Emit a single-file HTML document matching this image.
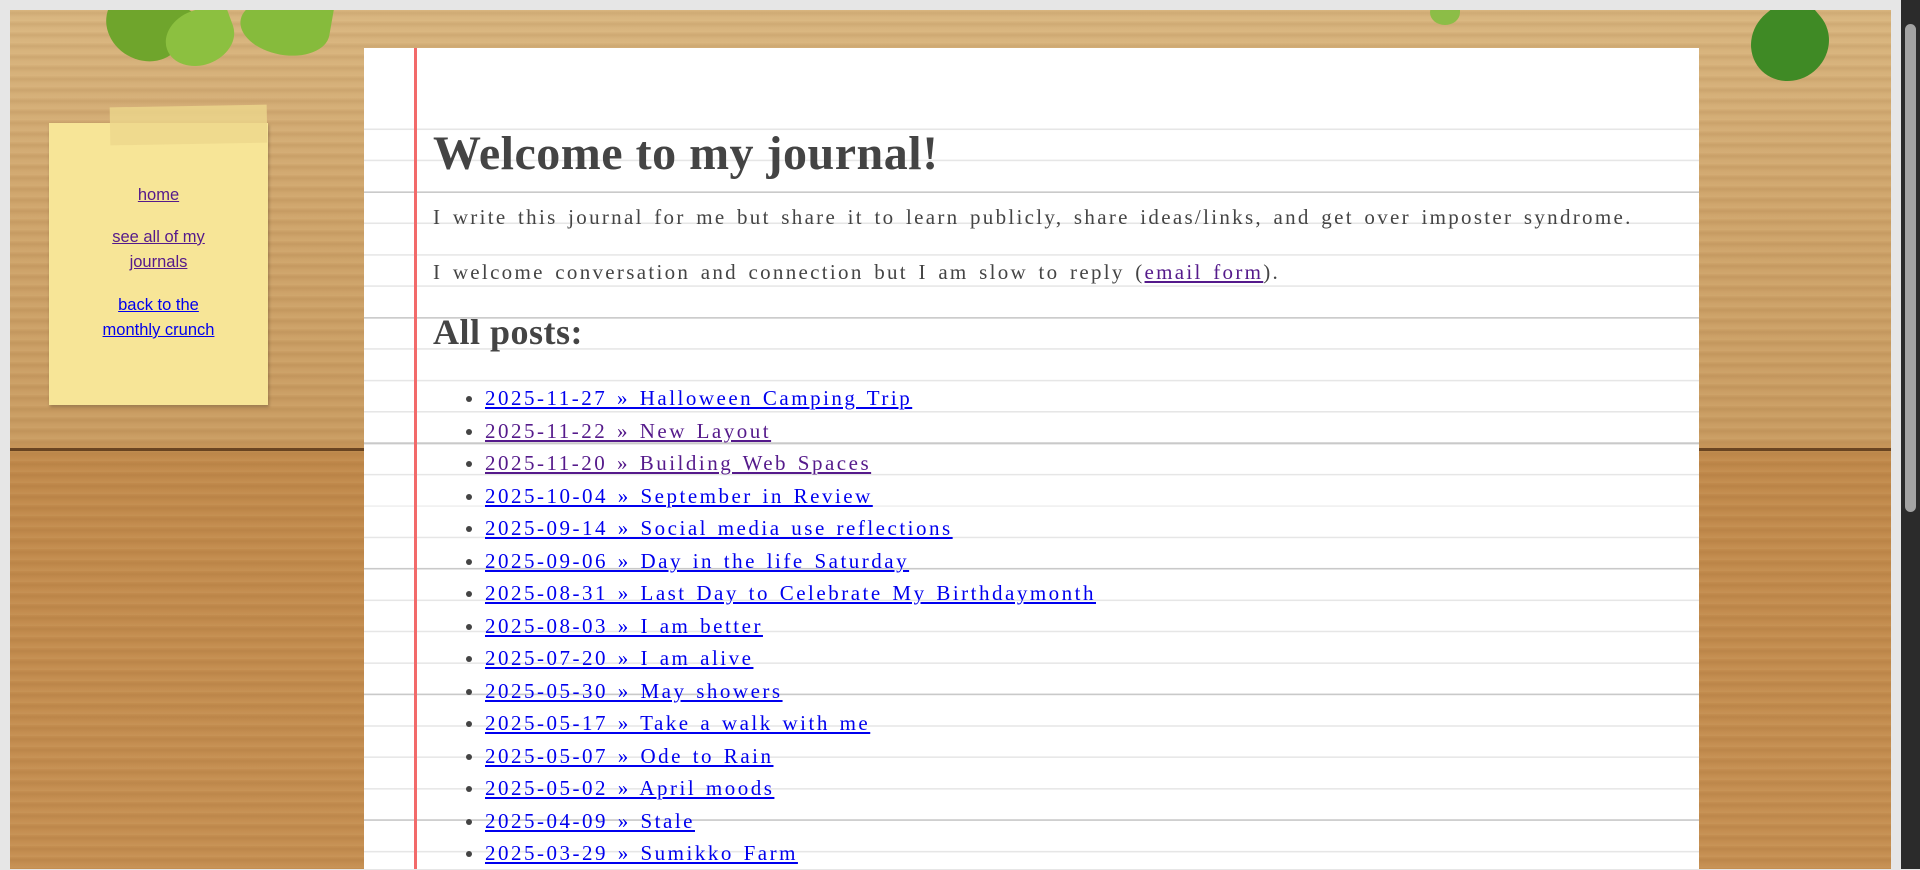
<!DOCTYPE html>
<html><head><meta charset="utf-8"><style>
html,body{margin:0;padding:0;}
body{width:1920px;height:869px;overflow:hidden;background:#e6e6e6;position:relative;font-family:"Liberation Serif",serif;}
.wood{position:absolute;left:10px;top:10px;width:1881px;height:859px;overflow:hidden;
background:
repeating-linear-gradient(180deg,rgba(120,70,20,0) 0px,rgba(120,70,20,.10) 3px,rgba(120,70,20,0) 7px,rgba(255,230,180,.06) 11px),
linear-gradient(180deg,#d9b680 0px,#cfa56c 200px,#c99c62 430px,#c18a4c 446px,#c58f52 869px);}
.plank{position:absolute;left:0;top:438px;width:100%;height:3px;background:#4a2a10;opacity:.75}
.leaf{position:absolute;background:#7cae36;border-radius:50% 0 50% 50%;}
.scroll{position:absolute;left:1901px;top:0;width:19px;height:869px;background:#2b2b2b}
.thumb{position:absolute;left:1905px;top:24px;width:11px;height:488px;background:#a3a3a3;border-radius:6px}
.paper{position:absolute;left:364px;top:48px;width:1335px;height:821px;background:#fff}
.lines{position:absolute;left:364px;top:48px;width:1335px;height:821px;
background:repeating-linear-gradient(180deg,transparent 0px,transparent 29.9px,#e6e6e6 29.9px,#e6e6e6 31.4px);background-position:0 19.2px}
.dark{position:absolute;left:364px;top:48px;width:1335px;height:821px;
background:repeating-linear-gradient(180deg,transparent 0px,transparent 124px,#c9c9c9 124px,#c9c9c9 125.6px);background-position:0 19.3px}
.cover{position:absolute;left:364px;top:48px;width:1335px;height:76px;background:#fff}
.red{position:absolute;left:414px;top:48px;width:3px;height:821px;background:#f26a6a}
.content{position:absolute;left:433px;top:50px;color:#444;}
h1{position:absolute;left:0;top:76px;margin:0;font-size:48px;white-space:nowrap;letter-spacing:0.5px;font-weight:bold}
p{position:absolute;left:0;margin:0;font-size:21px;white-space:nowrap;letter-spacing:2.3px;word-spacing:3px}
h2{position:absolute;left:0;top:261px;margin:0;font-size:36px;white-space:nowrap;font-weight:bold;letter-spacing:.5px}
ul{position:absolute;left:0;top:332px;margin:0;padding:0 0 0 52px;font-size:21px;line-height:32.5px;white-space:nowrap;}
li{letter-spacing:2.5px;word-spacing:2px}
a{color:#0000ee}
a.v{color:#551a8b}
.note{position:absolute;left:49px;top:123px;width:219px;height:282px;background:#f7e597;box-shadow:1px 2px 3px rgba(0,0,0,.25);font-family:"Liberation Sans",sans-serif;font-size:16.5px;text-align:center}
.tape{position:absolute;left:110px;top:106px;width:157px;height:38px;background:rgba(236,215,140,.8);transform:rotate(-1deg)}
.note div{position:absolute;left:0;width:100%;line-height:25px}
</style></head><body>
<div class="wood">
<div class="plank"></div>
<div class="leaf" style="left:95px;top:-20px;width:80px;height:70px;transform:rotate(30deg);background:#6fa52c"></div>
<div class="leaf" style="left:155px;top:0px;width:70px;height:55px;transform:rotate(-20deg);background:#8cc040"></div>
<div class="leaf" style="left:230px;top:-10px;width:90px;height:55px;transform:rotate(10deg);background:#86bb3c"></div>
<div class="leaf" style="left:1420px;top:-10px;width:30px;height:25px;background:#8cbd47"></div>
<div class="leaf" style="left:1740px;top:-5px;width:80px;height:75px;transform:rotate(-40deg);background:#3f8a25"></div>
</div>
<div class="scroll"></div><div class="thumb"></div>
<div class="paper"></div>
<div class="lines"></div>
<div class="dark"></div>
<div class="cover"></div>
<div class="red"></div>
<div class="content">
<h1>Welcome to my journal!</h1>
<p style="top:155px">I write this journal for me but share it to learn publicly, share ideas/links, and get over imposter syndrome.</p>
<p style="top:210px">I welcome conversation and connection but I am slow to reply (<a class="v" href="#">email form</a>).</p>
<h2>All posts:</h2>
<ul>
<li><a href="#">2025-11-27 » Halloween Camping Trip</a></li>
<li><a class="v" href="#">2025-11-22 » New Layout</a></li>
<li><a class="v" href="#">2025-11-20 » Building Web Spaces</a></li>
<li><a href="#">2025-10-04 » September in Review</a></li>
<li><a href="#">2025-09-14 » Social media use reflections</a></li>
<li><a href="#">2025-09-06 » Day in the life Saturday</a></li>
<li><a href="#">2025-08-31 » Last Day to Celebrate My Birthdaymonth</a></li>
<li><a href="#">2025-08-03 » I am better</a></li>
<li><a href="#">2025-07-20 » I am alive</a></li>
<li><a href="#">2025-05-30 » May showers</a></li>
<li><a href="#">2025-05-17 » Take a walk with me</a></li>
<li><a href="#">2025-05-07 » Ode to Rain</a></li>
<li><a href="#">2025-05-02 » April moods</a></li>
<li><a href="#">2025-04-09 » Stale</a></li>
<li><a href="#">2025-03-29 » Sumikko Farm</a></li>
</ul>
</div>
<div class="note">
<div style="top:60px"><a class="v" href="#">home</a></div>
<div style="top:102px"><a class="v" href="#">see all of my<br>journals</a></div>
<div style="top:170px"><a href="#">back to the<br>monthly crunch</a></div>
</div>
<div class="tape"></div>
</body></html>
